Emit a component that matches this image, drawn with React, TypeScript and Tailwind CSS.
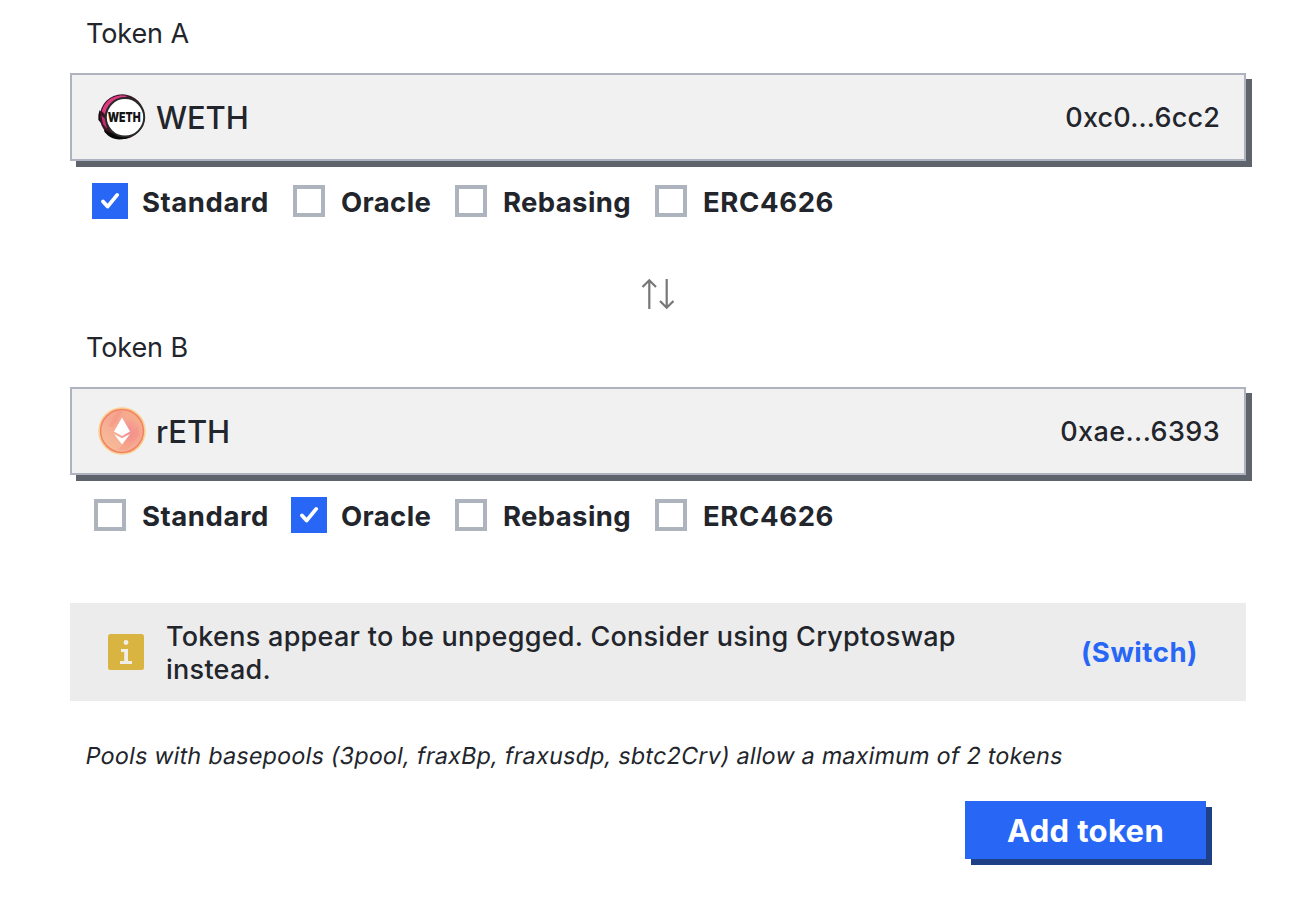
import React from "react";

function WethLogo() {
  return (
    <svg width="50" height="50" viewBox="0 0 50 50" className="shrink-0 overflow-visible">
      <path d="M2.6 18 Q.8 23 1.4 28 L4 31 L6 22 Z" fill="#15090f" />
      <circle cx="25.2" cy="24.7" r="22.4" fill="#3a1626" />
      <path d="M4.8 19 Q9 5 24 3.2 L31 4 Q20 7 14 12 Q9 17 8.3 23 L7.5 22 Z" fill="#dc3a80" />
      <path d="M4.4 23.5 L8.3 27 L10 37 L6 32 Z" fill="#c23070" />
      <path d="M7 37.5 Q14 43 34 44.5 Q29 47.4 22 47.4 Q15 47 11 43.5 L7.5 40Z" fill="#080808" />
      <circle cx="28" cy="25.3" r="19.2" fill="#fff" stroke="#2a2a2a" strokeWidth="2" />
      <g transform="translate(27.2 30.2) scale(.78 1)">
        <text textAnchor="middle" fontFamily="Inter, sans-serif" fontWeight="900" fontSize="13.5" fill="#151515">WETH</text>
      </g>
    </svg>
  );
}

function RethLogo() {
  return (
    <svg width="48" height="48" viewBox="0 0 48 48" className="ml-px shrink-0">
      <defs>
        <linearGradient id="coin" x1="0" y1="1" x2="1" y2="0">
          <stop offset="0" stopColor="#f8c49a" />
          <stop offset=".55" stopColor="#f5a592" />
          <stop offset="1" stopColor="#f6b08a" />
        </linearGradient>
        <radialGradient id="glow">
          <stop offset="0" stopColor="#f18292" />
          <stop offset="1" stopColor="#f18292" stopOpacity="0" />
        </radialGradient>
      </defs>
      <circle cx="24" cy="24" r="23.8" fill="#fad08f" />
      <circle cx="24" cy="24" r="21.4" fill="url(#coin)" stroke="#f28267" strokeWidth="1.5" />
      <path d="M10 20 L19 4 L25 4 L15 20Z M20 43 L40 19 L42 28 L29 43Z" fill="#f58b78" opacity=".35" />
      <circle cx="30" cy="24" r="13" fill="url(#glow)" opacity=".7" />
      <path d="M24 10.5 L32 24.5 L24 29 L16 24.5Z M16 27 L24 31.3 L32 27 L24 37.5Z" fill="#fff" />
    </svg>
  );
}

function CheckOption({ label, checked, className }: { label: string; checked: boolean; className: string }) {
  return (
    <label className={`flex h-9 items-center ${className}`}>
      <span className="flex size-9 shrink-0 items-center justify-center">
        {checked ? (
          <span className="flex size-9 items-center justify-center bg-[#2867f6]">
            <svg width="20" height="20" viewBox="0 0 20 20" fill="none">
              <path d="M3 10.4 L7.6 15.6 L17.2 3.9" stroke="#fff" strokeWidth="3.8" strokeLinecap="round" strokeLinejoin="round" />
            </svg>
          </span>
        ) : (
          <span className="size-8 border-4 border-[#aeb4bd] bg-white" />
        )}
      </span>
      <span className="ml-3.5 pt-px text-[27.5px] leading-8 font-bold">{label}</span>
    </label>
  );
}

type TokenFieldProps = {
  title: string;
  symbol: string;
  address: string;
  addressClass: string;
  logo: React.ReactNode;
  selected: string;
};

function TokenField({ title, symbol, address, addressClass, logo, selected }: TokenFieldProps) {
  return (
    <section>
      <h2 className="pt-px pl-4 text-[27px] leading-8 tracking-[-0.1px]">{title}</h2>
      <div className="mt-[23px] flex h-[88px] items-center border-2 border-[#aeb3bf] bg-[#f1f1f1] pr-6 pl-[26px] shadow-[6px_6px_0_#5f646c]">
        <div className="-ml-px flex w-[59px]">{logo}</div>
        <span className="flex-1 pt-0.5 text-[31px] leading-10 font-medium tracking-[-0.1px]">{symbol}</span>
        <span className={`pt-px text-[27px] leading-8 font-medium ${addressClass}`}>{address}</span>
      </div>
      <div className="mt-[22px] flex pl-[22px]">
        <CheckOption label="Standard" checked={selected === "Standard"} className="w-[199px] tracking-[0.56px]" />
        <CheckOption label="Oracle" checked={selected === "Oracle"} className="w-[162px] tracking-[0.38px]" />
        <CheckOption label="Rebasing" checked={selected === "Rebasing"} className="w-[200px] tracking-[0.36px]" />
        <CheckOption label="ERC4626" checked={selected === "ERC4626"} className="w-[190px] tracking-[0.62px]" />
      </div>
    </section>
  );
}

export default function App() {
  return (
    <main className="h-[904px] w-full overflow-hidden bg-white font-['Inter',sans-serif] whitespace-nowrap text-[#22252b]">
      <div className="ml-[70px] w-[1176px] pt-[17px]">
        <TokenField title="Token A" symbol="WETH" address="0xc0...6cc2" addressClass="tracking-[0.17px]" logo={<WethLogo />} selected="Standard" />
        <div className="flex h-[112px] justify-center pt-[59px]">
          <svg width="36" height="32" viewBox="0 0 36 32" fill="none" stroke="#777" strokeWidth="2.2">
            <path d="M9.3 31 V2.5 M2.5 9 L9.3 2.2 L16 9 M26.7 1 V29.5 M20 23 L26.7 29.8 L33.5 23" />
          </svg>
        </div>
        <TokenField title="Token B" symbol="rETH" address="0xae...6393" addressClass="tracking-[0.4px]" logo={<RethLogo />} selected="Oracle" />

        <div className="mt-[70px] flex h-[98px] items-center bg-[#ececec] pr-[48px] pl-[38px]">
          <svg width="36" height="36" viewBox="0 0 36 36" className="shrink-0">
            <rect width="36" height="36" rx="2.5" fill="#d9b440" />
            <circle cx="18" cy="8.5" r="2.4" fill="#f0eee9" />
            <path d="M13 15 H20 V27 H24 V30 H12 V27 H16.2 V18 H13Z" fill="#f0eee9" />
          </svg>
          <p className="ml-[22px] flex-1 pt-0.5 text-[27px] leading-[33px] font-medium tracking-[0.27px]">
            Tokens appear to be unpegged. Consider using Cryptoswap
            <br />
            instead.
          </p>
          <button className="text-[27.5px] leading-8 font-bold tracking-[0.55px] text-[#2867f6]">(Switch)</button>
        </div>

        <p className="mt-10 pl-4 text-[23.25px] leading-[30px] tracking-[0.27px]">
          <span className="inline-block -skew-x-10">
            Pools with basepools (3pool, fraxBp, fraxusdp, sbtc2Crv) allow a maximum of 2 tokens
          </span>
        </p>
        <div className="mt-[30px] flex justify-end pr-10">
          <button className="h-[58px] w-[241px] bg-[#2867f6] pt-0.5 text-[31px] leading-10 font-bold tracking-[0.35px] text-white shadow-[6px_6px_0_#1f3f86]">
            Add token
          </button>
        </div>
      </div>
    </main>
  );
}
